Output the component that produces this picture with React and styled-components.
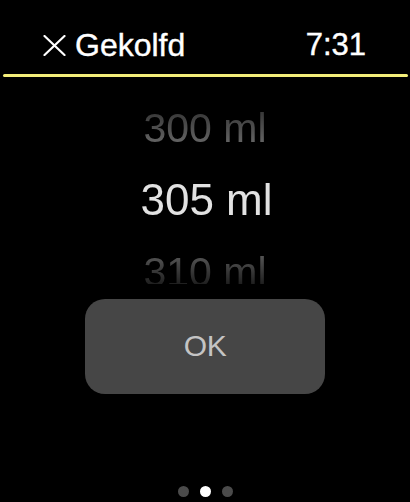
import styled, { createGlobalStyle } from "styled-components";

const GlobalStyle = createGlobalStyle`
	html, body {
		margin: 0;
		padding: 0;
		background: #000;
	}
	body {
		font-family: "Liberation Sans", Arial, sans-serif;
	}
`;

const Screen = styled.div`
	width: 410px;
	height: 502px;
	background: #000;
	display: flex;
	flex-direction: column;
	overflow: hidden;
`;

const Header = styled.div`
	display: flex;
	align-items: center;
	justify-content: space-between;
	padding: 29px 44px 0 43px;
	height: 32px;
	color: #fff;
	-webkit-text-stroke: 0.4px #fff;
`;

const Title = styled.div`
	display: flex;
	align-items: center;
	gap: 9px;
	font-size: 32px;
	line-height: 32px;
`;

const Clock = styled.div`
	font-size: 31px;
	line-height: 32px;
`;

const Rule = styled.div`
	margin: 13px 2px 0 3px;
	height: 2.5px;
	border-radius: 2px;
	background: #f3ee7a;
`;

const fade = "linear-gradient(to bottom, rgba(0, 0, 0, 0.25) 0%, #000 28%, #000 80%, rgba(0, 0, 0, 0.3) 100%)";

const Picker = styled.div`
	margin-top: 15px;
	height: 192px;
	overflow: hidden;
	display: flex;
	flex-direction: column;
	align-items: center;
	-webkit-mask-image: ${fade};
	mask-image: ${fade};
`;

const Item = styled.div`
	height: 72px;
	line-height: 72px;
	flex-shrink: 0;
	font-size: ${({ $active }) => ($active ? "44px" : "41px")};
	color: ${({ $active }) => ($active ? "#e2e2e2" : "#686868")};
	padding-left: ${({ $active }) => ($active ? "3px" : "0")};
`;

const Button = styled.div`
	margin: 15px 0 0 85px;
	width: 240px;
	height: 95px;
	border-radius: 20px;
	background: #464646;
	display: flex;
	align-items: center;
	justify-content: center;
	color: #c4c4c4;
	font-size: 30px;
	letter-spacing: -0.5px;
`;

const Dots = styled.div`
	margin-top: auto;
	margin-bottom: 5px;
	display: flex;
	justify-content: center;
	gap: 11px;
`;

const Dot = styled.div`
	width: 11px;
	height: 11px;
	border-radius: 50%;
	background: ${({ $active }) => ($active ? "#fff" : "#4b4b4b")};
`;

const CloseIcon = () => (
	<svg width="23" height="21" viewBox="0 0 23 21">
		<path d="M1.5 1L21.5 20M21.5 1L1.5 20" stroke="#fff" strokeWidth="2.2" strokeLinecap="round" />
	</svg>
);

export default function App() {
	return (
		<Screen>
			<GlobalStyle />
			<Header>
				<Title>
					<CloseIcon />
					<span>Gekolfd</span>
				</Title>
				<Clock>7:31</Clock>
			</Header>
			<Rule />
			<Picker>
				<Item>300 ml</Item>
				<Item $active>305 ml</Item>
				<Item>310 ml</Item>
			</Picker>
			<Button>OK</Button>
			<Dots>
				<Dot />
				<Dot $active />
				<Dot />
			</Dots>
		</Screen>
	);
}
